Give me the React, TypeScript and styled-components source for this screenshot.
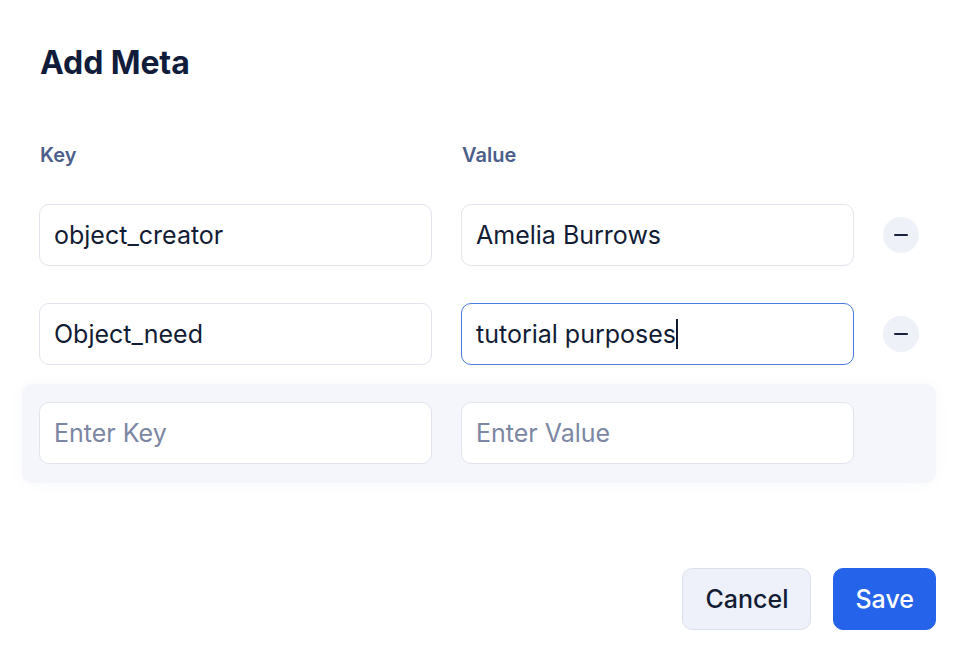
import React, { FC } from 'react';
import styled, { createGlobalStyle } from 'styled-components';

const GlobalStyle = createGlobalStyle`
    html, body {
        margin: 0;
        padding: 0;
        background: #ffffff;
    }
    body {
        font-family: Inter, 'Noto Sans', 'Liberation Sans', sans-serif;
        color: #0f172a;
    }
`;

type MetaRow = {
    key: string;
    value: string;
    focused?: boolean;
};

const rows: MetaRow[] = [
    { key: 'object_creator', value: 'Amelia Burrows' },
    { key: 'Object_need', value: 'tutorial purposes', focused: true },
];

const Dialog = styled.div`
    width: 914px;
    padding: 43px 0 0 22px;
    box-sizing: content-box;
`;

const Title = styled.h2`
    margin: 0 0 60px 18px;
    font-size: 32px;
    line-height: 40px;
    font-weight: 700;
    color: #111c3b;
    letter-spacing: -0.1px;
`;

const Grid = styled.div`
    display: grid;
    grid-template-columns: 393px 393px 36px;
    column-gap: 29px;
    align-items: center;
    padding: 0 18px 0 17px;
`;

const Labels = styled(Grid)`
    margin-bottom: 19px;
`;

const Label = styled.div`
    font-size: 20px;
    line-height: 24px;
    font-weight: 600;
    color: #4c5f8b;
    padding-left: 1px;
`;

const Row = styled(Grid)<{ $draft?: boolean }>`
    padding-top: 18px;
    padding-bottom: 19px;
    border-radius: 10px;
    background: ${(p) => (p.$draft ? '#f5f6fc' : 'transparent')};
    box-shadow: ${(p) => (p.$draft ? '0 0 14px rgba(120, 130, 190, 0.05)' : 'none')};
`;

const Field = styled.div<{ $focused?: boolean; $empty?: boolean }>`
    height: 62px;
    box-sizing: border-box;
    display: flex;
    align-items: center;
    padding: 0 14px;
    background: #ffffff;
    border: 1px solid ${(p) => (p.$focused ? '#4a7bdc' : '#e1e4ec')};
    border-radius: 10px;
    font-size: 25px;
    color: ${(p) => (p.$empty ? '#7c87a3' : '#131c35')};
    white-space: nowrap;
`;

const Caret = styled.span`
    display: inline-block;
    width: 2px;
    height: 30px;
    background: #111a33;
`;

const RemoveButton = styled.button`
    width: 36px;
    height: 36px;
    border-radius: 50%;
    border: none;
    padding: 0;
    background: #eef1f8;
    display: flex;
    align-items: center;
    justify-content: center;
    cursor: pointer;
`;

const Dash = styled.span`
    width: 14px;
    height: 2.5px;
    border-radius: 1px;
    background: #18223f;
`;

const Footer = styled.div`
    display: flex;
    justify-content: flex-end;
    gap: 22px;
    margin-top: 85px;
`;

const Button = styled.button<{ $primary?: boolean }>`
    height: 62px;
    box-sizing: border-box;
    padding: 0 ${(p) => (p.$primary ? '21px' : '22px')};
    border-radius: 10px;
    font-family: inherit;
    font-size: 25px;
    font-weight: 500;
    border: 1px solid ${(p) => (p.$primary ? '#2563eb' : '#dde1ea')};
    background: ${(p) => (p.$primary ? '#2563eb' : '#eef1f9')};
    color: ${(p) => (p.$primary ? '#ffffff' : '#131c35')};
    cursor: pointer;
`;

const App: FC = () => {
    return (
        <>
            <GlobalStyle />
            <Dialog>
                <Title>Add Meta</Title>
                <Labels>
                    <Label>Key</Label>
                    <Label>Value</Label>
                </Labels>
                {rows.map((row) => (
                    <Row key={row.key}>
                        <Field>{row.key}</Field>
                        <Field $focused={row.focused}>
                            {row.value}
                            {row.focused && <Caret />}
                        </Field>
                        <RemoveButton aria-label="Remove">
                            <Dash />
                        </RemoveButton>
                    </Row>
                ))}
                <Row $draft>
                    <Field $empty>Enter Key</Field>
                    <Field $empty>Enter Value</Field>
                </Row>
                <Footer>
                    <Button>Cancel</Button>
                    <Button $primary>Save</Button>
                </Footer>
            </Dialog>
        </>
    );
};
export default App;
